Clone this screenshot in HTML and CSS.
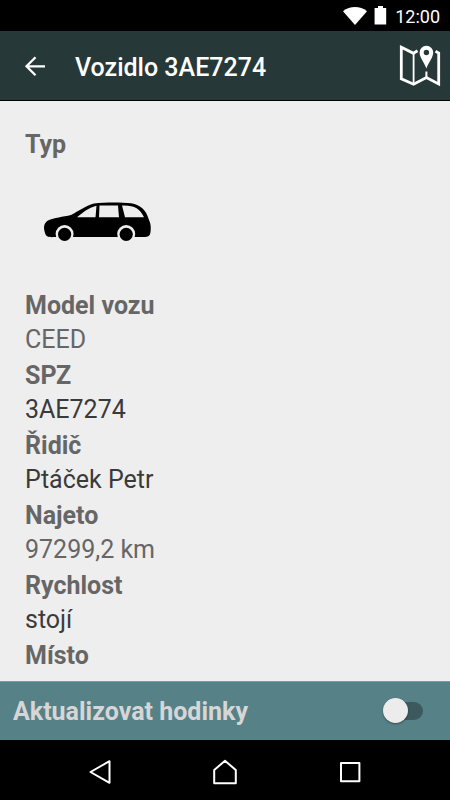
FILE: index.html
```html
<!DOCTYPE html>
<html lang="cs">
<head>
    <meta charset="UTF-8">
    <meta name="viewport" content="width=device-width, initial-scale=1.0">
    <title>Vozidlo 3AE7274</title>
    <link rel="stylesheet" href="styles.css">
</head>
<body>

    <!-- Status bar -->
    <div class="statusbar">
        <svg class="wifi" width="24" height="18" viewBox="0 0 24 18">
            <path d="M0 4.2C7-1.3 17-1.3 24 4.2L12 18z" fill="#fff"/>
        </svg>
        <svg class="battery" width="13" height="19" viewBox="0 0 13 19">
            <path d="M4 0h5v2h3.2v16.4H.6V2H4z" fill="#fff"/>
        </svg>
        <span>12:00</span>
    </div>

    <!-- Toolbar -->
    <header class="toolbar">
        <svg class="back" width="22" height="22" viewBox="0 0 22 22">
            <path d="M21 11.300H3M11.500 2.300L2.500 11.300l9 9" fill="none" stroke="#fff" stroke-width="2.300"/>
        </svg>
        <h1>Vozidlo 3AE7274</h1>
        <svg class="map" width="42" height="42" viewBox="0 0 42 42">
            <path d="M18.500 5.800L14.500 8.300 2.300 2.200v31.600l12.300 5.500 12.800-6.800L39.700 39V8L36.500 6.200" fill="none" stroke="#fff" stroke-width="2.800"/>
            <path d="M14.600 8v31" stroke="#fff" stroke-width="1.800"/>
            <path d="M27.400 26.500v6" stroke="#fff" stroke-width="2"/>
            <path d="M27.400 .8a6.800 6.800 0 0 0-6.800 6.800c0 5 4.200 9 6.800 15.900 2.600-6.900 6.800-10.900 6.800-15.900a6.800 6.800 0 0 0-6.800-6.800zm0 4a2.700 2.700 0 1 1 0 5.400 2.700 2.700 0 0 1 0-5.400z" fill="#fff" fill-rule="evenodd"/>
        </svg>
    </header>

    <!-- Vehicle detail -->
    <main class="detail">
        <h2>Typ</h2>
        <svg class="car" width="110" height="42" viewBox="0 0 110 42">
            <path d="M2 31C0 25 1 21 5 18.500 11 15.500 20 15 28 13 36 9 42 4 51 1.500 62 .2 78 .2 88 1.300 98 3 103 8 106 18c2 4 2 8 1.500 12-.5 4-2 4.800-7 5H12C6 35.500 3 35 2 31z"/>
            <path class="window" d="M34 15.200C41 10 45 6 53.500 3.800L52.500 15.200zM56.500 3.500h18.500l1 11.700H56zM79 3.500c12-.5 18 3 22 11.700H82z"/>
            <circle class="arch" cx="21.600" cy="32" r="9"/>
            <circle class="arch" cx="83.200" cy="32" r="9"/>
            <circle cx="21.600" cy="32.300" r="6.600"/>
            <circle cx="83.200" cy="32.300" r="6.600"/>
        </svg>
        <h2>Model vozu</h2>
        <p>CEED</p>
        <h2>SPZ</h2>
        <p class="dark">3AE7274</p>
        <h2>Řidič</h2>
        <p class="dark">Ptáček Petr</p>
        <h2>Najeto</h2>
        <p>97299,2 km</p>
        <h2>Rychlost</h2>
        <p class="dark">stojí</p>
        <h2>Místo</h2>
    </main>

    <!-- Watch update switch -->
    <div class="update">
        <span>Aktualizovat hodinky</span>
        <div class="switch"><div class="thumb"></div></div>
    </div>

    <!-- Android navigation -->
    <nav class="navbar">
        <svg width="26" height="26" viewBox="0 0 26 26"><path d="M22.500 2.200v21.600L3.500 13z"/></svg>
        <svg width="26" height="26" viewBox="0 0 26 26"><path d="M2.200 24.200V11L13 1.800 23.800 11v13.200z"/></svg>
        <svg width="26" height="26" viewBox="0 0 26 26"><path d="M4 4h18.400v18.200H4z"/></svg>
    </nav>

</body>
</html>
```

FILE: styles.css
```css
* {
    box-sizing: border-box;
    margin: 0;
    padding: 0;
}
body {
    display: flex;
    flex-direction: column;
    height: 800px;
    overflow: hidden;
    background: #eee;
    font-family: Roboto, sans-serif;
}
.statusbar {
    display: flex;
    align-items: center;
    justify-content: flex-end;
    height: 31px;
    padding-right: 10px;
    background: #000;
    color: #fff;
    font-size: 18px;
    font-weight: 400;
}
.statusbar span {
    padding-top: 2px;
}
.wifi {
    margin-right: 7px;
}
.battery {
    margin-right: 8px;
}
.toolbar {
    display: flex;
    align-items: center;
    height: 70px;
    padding: 0 9px 0 24px;
    background: #263938;
    border-bottom: 1px solid #000;
    color: #fff;
}
.toolbar h1 {
    margin-left: 29px;
    padding-top: 3px;
    font-size: 25px;
    font-weight: 500;
}
.map {
    margin-left: auto;
    margin-top: 1px;
}
.detail {
    flex: 1;
    overflow: hidden;
    padding: 25px 25px 0;
    color: #666;
    font-size: 25px;
}
.detail h2 {
    height: 36px;
    font-size: 25px;
    font-weight: 700;
    line-height: 38px;
}
.detail p {
    height: 34px;
    font-weight: 400;
    line-height: 34px;
}
.detail .dark {
    color: #3a3a3a;
}
.car {
    display: block;
    margin: 40px 0 43px 18px;
}
.car .window,
.car .arch {
    fill: #eee;
}
.update {
    display: flex;
    align-items: center;
    justify-content: space-between;
    height: 59px;
    padding: 0 27px 0 13px;
    background: #568187;
    border-top: 1px solid #7a9da1;
    color: #d6d6d6;
    font-size: 25px;
    font-weight: 700;
}
.update span {
    padding-top: 1px;
}
.switch {
    display: flex;
    align-items: center;
    width: 36px;
    height: 18px;
    margin-bottom: 1px;
    border-radius: 9px;
    background: #3c5a5e;
}
.thumb {
    flex: none;
    width: 25px;
    height: 25px;
    margin-left: -4px;
    border-radius: 50%;
    background: #ececec;
    box-shadow: 0 1px 2px rgba(0, 0, 0, 0.4);
}
.navbar {
    display: flex;
    align-items: center;
    justify-content: space-between;
    height: 60px;
    padding: 3px 87px 0;
    background: #000;
}
.navbar path {
    fill: none;
    stroke: #fff;
    stroke-width: 2;
    stroke-linejoin: round;
}
```
